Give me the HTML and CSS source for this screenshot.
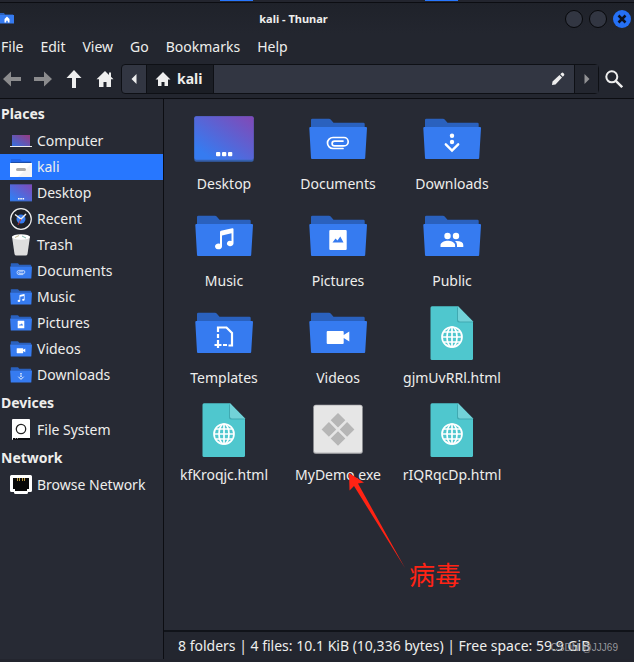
FILE: index.html
```html
<!DOCTYPE html>
<html lang="en">
<head>
<meta charset="utf-8">
<title>kali - Thunar</title>
<link rel="stylesheet" href="styles.css">
</head>
<body>
<svg class="defs" aria-hidden="true">
  <defs>
    <linearGradient id="screen" x1="0" y1="1" x2="1" y2="0">
      <stop offset="0.15" stop-color="#367bf0"/><stop offset="1" stop-color="#8348b5"/>
    </linearGradient>
    <linearGradient id="laptop" x1="0" y1="1" x2="1" y2="0">
      <stop offset="0" stop-color="#3470e0"/><stop offset="1" stop-color="#983a80"/>
    </linearGradient>
    <symbol id="folder" viewBox="0 0 64 64">
      <path fill="#2a61be" d="M5 21V13q0-1.300 1.300-1.300H23q1 0 1.700.7l2.800 3.300H57.400q1.300 0 1.300 1.300v4z"/>
      <path fill="#367bf0" d="M4.300 20H60q1 0 1 1l-1.800 30q0 1-1 1H6q-1 0-1-1L3.300 21q0-1 1-1z"/>
    </symbol>
    <symbol id="clip" viewBox="0 0 64 64">
      <path fill="none" stroke="#fff" stroke-width="1.700" stroke-linecap="round" d="M37 41.500H27a5.500 5.500 0 0 1 0-11H38a4.200 4.200 0 0 1 0 8.400H28.500a2.400 2.400 0 0 1 0-4.800H37"/>
    </symbol>
    <symbol id="down" viewBox="0 0 64 64">
      <circle fill="#fff" cx="32" cy="28.700" r="2.200"/><circle fill="#fff" cx="32" cy="35" r="2.200"/>
      <path fill="none" stroke="#fff" stroke-width="2.400" stroke-linecap="round" d="M25.800 37.300L32 43.500l6.200-6.200"/>
    </symbol>
    <symbol id="note" viewBox="0 0 64 64">
      <path fill="#fff" d="M28 28q0-1 1-1.300L40.300 24.300q1.200-.2 1.200 1V39.500a3.300 2.700 0 1 1-2-2.500V29.300L30 31.500V42.500a3.500 2.900 0 1 1-2-2.700z"/>
    </symbol>
    <symbol id="photo" viewBox="0 0 64 64">
      <rect fill="#fff" x="23.300" y="26" width="17.400" height="20" rx="1"/>
      <path fill="#367bf0" d="M26.500 38.500l3-4 2 2 2.800-4 3.200 6z"/>
    </symbol>
    <symbol id="people" viewBox="0 0 64 64">
      <g fill="#fff"><circle cx="27.500" cy="32" r="3.200"/><circle cx="36" cy="32" r="3.200"/>
      <path d="M20.500 43v-1.800c0-3 4.700-4.400 7.300-4.400s7.300 1.400 7.300 4.400V43zM37 43v-2q0-2.400-2-4 8.300-.3 8.300 4V43z"/></g>
    </symbol>
    <symbol id="template" viewBox="0 0 64 64">
      <g fill="none" stroke="#fff" stroke-width="2.200"><path d="M26 31v-4.500h8.500l5.500 5.500v12.500h-3.500"/><path d="M26 33v4M26 39v8M22.500 44h7M31 44h4"/></g>
    </symbol>
    <symbol id="camera" viewBox="0 0 64 64">
      <path fill="#fff" d="M21.700 30h15q1 0 1 1v3l5.600-3.400v9.800L37.700 37v5q0 1-1 1h-15q-1 0-1-1V31q0-1 1-1z"/>
    </symbol>
    <symbol id="desktop" viewBox="0 0 64 64">
      <rect x="2.300" y="9.300" width="59.400" height="45.400" rx="2" fill="#3560ad"/>
      <rect x="2.300" y="9.300" width="59.400" height="43.400" rx="2" fill="url(#screen)"/>
      <g fill="#fff"><rect x="24" y="45" width="4.300" height="4.300" rx="1"/><rect x="30" y="45" width="4.300" height="4.300" rx="1"/><rect x="36" y="45" width="4.300" height="4.300" rx="1"/></g>
    </symbol>
    <symbol id="html" viewBox="0 0 64 64">
      <path fill="#4fc7ce" d="M12 5.300H38L53 20.500V57.500q0 1.500-1.500 1.500H12q-1.500 0-1.500-1.500V6.800q0-1.500 1.500-1.500z"/>
      <path fill="#40a9b1" d="M37 6v13.500q0 2 2 2h14v-1z"/>
      <path fill="#72d2d8" d="M38 5.300V18.500q0 2 2 2H53z"/>
      <g fill="none" stroke="#fff" stroke-width="1.700"><circle cx="32" cy="36" r="10"/><ellipse cx="32" cy="36" rx="5" ry="10"/><path d="M32 26v20M22 36h20M23.500 31h17M23.500 41h17"/></g>
    </symbol>
    <symbol id="exe" viewBox="0 0 64 64">
      <rect x="7.300" y="6.700" width="49.400" height="49" rx="2.500" fill="#b5b5b7"/>
      <rect x="8" y="7.400" width="48" height="47" rx="2" fill="#e6e6e6"/>
      <path fill="#b6b6b6" d="M32 15l7.300 7.300-7.300 7.300-7.300-7.300zM32 33.200l7.300 7.300-7.300 7.300-7.300-7.300zM22.900 24.100l7.300 7.300-7.300 7.300-7.300-7.300zM41.100 24.100l7.300 7.300-7.300 7.300-7.300-7.300z"/>
    </symbol>
    <symbol id="home" viewBox="0 0 18 18">
      <path fill="#eee" d="M9 1L.5 9.300H3V17h4.500v-5h3v5H15V9.300h2.500L15 6.800V2.500h-2v2.400z"/>
    </symbol>
  </defs>
</svg>

<div class="window">
  <div class="panel-edge"><i class="task"></i><i class="task"></i></div>
  <header class="titlebar">
    <svg class="app-icon" viewBox="0 0 14 12"><path fill="#2a61be" d="M0 0h4l1 1.500h8V4H0z"/><path fill="#367bf0" d="M0 2h14v8.500H0z"/><path fill="#fff" d="M7 3.500L4.500 6v3.500h1.700V7.700h1.600v1.800h1.700V6z"/></svg>
    <h1 class="title">kali - Thunar</h1>
    <div class="controls">
      <button class="control" aria-label="Minimize"></button>
      <button class="control" aria-label="Maximize"></button>
      <button class="control close" aria-label="Close"><svg viewBox="0 0 18 18"><path d="M5.500 5.500l7 7M12.500 5.500l-7 7" stroke="#0c1220" stroke-width="2.500"/></svg></button>
    </div>
  </header>
  <nav class="menubar">
    <button>File</button><button>Edit</button><button>View</button><button>Go</button><button>Bookmarks</button><button>Help</button>
  </nav>
  <div class="toolbar">
    <button class="tool" aria-label="Back" disabled><svg viewBox="0 0 18 18"><path fill="#8b8b8d" d="M0 9l8-7.500V7h10v4H8v5.500z"/></svg></button>
    <button class="tool" aria-label="Forward" disabled><svg viewBox="0 0 18 18"><path fill="#8b8b8d" d="M18 9l-8-7.500V7H0v4h10v5.500z"/></svg></button>
    <button class="tool" aria-label="Up"><svg viewBox="0 0 18 18"><path fill="#eee" d="M9 0l7.500 8H11v10H7V8H1.500z"/></svg></button>
    <button class="tool" aria-label="Home"><svg><use href="#home"/></svg></button>
    <div class="pathbar">
      <button class="path-prev" aria-label="Scroll left"><svg viewBox="0 0 6 10"><path fill="#eee" d="M5.500 0v10L.5 5z"/></svg></button>
      <button class="crumb"><svg viewBox="0 0 18 18"><path fill="#eee" d="M9 2L1.500 9.500H4V16h3.500v-4h3v4H14V9.500h2.500z"/></svg>kali</button>
      <button class="path-edit" aria-label="Edit path"><svg viewBox="0 0 14 14"><path fill="#eee" d="M1 13l.5-3.500L8.500 3 11 5.500 4.500 12.500zM9.300 2.200L10.500 1q1-.8 1.800 0l.7.700q.8.900 0 1.800l-1.200 1.200z"/></svg></button>
      <button class="path-next" aria-label="Scroll right" disabled><svg viewBox="0 0 6 10"><path fill="#929295" d="M.5 0v10l5-5z"/></svg></button>
    </div>
    <button class="tool" aria-label="Search"><svg viewBox="0 0 18 18"><circle cx="6.800" cy="6.800" r="5.500" fill="none" stroke="#eee" stroke-width="2"/><path stroke="#eee" stroke-width="2.400" d="M10.800 10.800l6.400 6.400"/></svg></button>
  </div>

  <div class="body">
    <nav class="sidebar">
      <h2>Places</h2>
      <ul>
        <li><a href="#"><svg viewBox="0 0 22 22"><rect x="2" y="5" width="18" height="11" fill="url(#laptop)"/><path fill="#eee" d="M0 16h22v1H0z"/></svg>Computer</a></li>
        <li class="selected"><a href="#"><svg viewBox="0 0 22 22"><path fill="#2065e8" d="M1 3h9l2 2h9v3H1z"/><path fill="#1c4ea8" d="M1 6h20v2H1z"/><path fill="#fff" d="M0 7h22v14H0z"/><path fill="#ececef" d="M22 7v14H8z" opacity=".6"/><rect x="6" y="12" width="10" height="3" rx="1.500" fill="#aaa"/></svg>kali</a></li>
        <li><a href="#"><svg viewBox="3 3 58 58"><use href="#desktop" width="64" height="64"/></svg>Desktop</a></li>
        <li><a href="#"><svg viewBox="0 0 22 22"><circle cx="11" cy="11" r="10.300" fill="#1e2129" stroke="#eee" stroke-width="1.200"/><circle cx="11" cy="11" r="4.500" fill="#367bf0"/><path d="M5 6.500l6 4.500 5-5" fill="none" stroke="#eee" stroke-width="1.400"/><path d="M11 11l-3 6" stroke="#b33" /></svg>Recent</a></li>
        <li><a href="#"><svg viewBox="0 0 22 22"><path fill="#dedede" d="M2 2.500h18L17.500 20q-.3 1.500-2 1.500h-9q-1.700 0-2-1.500z"/><ellipse cx="11" cy="3" rx="9" ry="2.800" fill="#fff"/><path stroke="#c3ba91" d="M5 3.500l4-2"/><path stroke="#82b8ae" d="M12 2l4 2"/></svg>Trash</a></li>
        <li><a href="#"><svg viewBox="3 3 58 58"><use href="#folder" width="64" height="64"/><use href="#clip" width="64" height="64"/></svg>Documents</a></li>
        <li><a href="#"><svg viewBox="3 3 58 58"><use href="#folder" width="64" height="64"/><use href="#note" width="64" height="64"/></svg>Music</a></li>
        <li><a href="#"><svg viewBox="3 3 58 58"><use href="#folder" width="64" height="64"/><use href="#photo" width="64" height="64"/></svg>Pictures</a></li>
        <li><a href="#"><svg viewBox="3 3 58 58"><use href="#folder" width="64" height="64"/><use href="#camera" width="64" height="64"/></svg>Videos</a></li>
        <li><a href="#"><svg viewBox="3 3 58 58"><use href="#folder" width="64" height="64"/><use href="#down" width="64" height="64"/></svg>Downloads</a></li>
      </ul>
      <h2>Devices</h2>
      <ul>
        <li><a href="#"><svg viewBox="0 0 22 22"><rect x="2" y="0" width="18" height="21" rx="1" fill="#fff"/><path fill="#090a0e" d="M3 19h17v2H3z"/><path fill="#888" d="M5 19h1v1H5zM7 19h1v1H7z"/><circle cx="11" cy="10" r="4.700" fill="none" stroke="#222" stroke-width="1.300"/></svg>File System</a></li>
      </ul>
      <h2>Network</h2>
      <ul>
        <li><a href="#"><svg viewBox="0 0 22 22"><path fill="#fff" d="M1.500 1h19Q22 1 22 2.500v14q0 1.500-1.500 1.500H18v.5q0 1.500-1.500 1.500h-11Q4 20 4 18.500V18H1.500Q0 18 0 16.500v-14Q0 1 1.500 1z"/><path fill="#080808" d="M3 4h16v11h-2v2H5v-2H3z"/><path stroke="#b8963c" d="M7.500 4v3M9.500 4v3M12.500 4v3M14.500 4v3"/></svg>Browse Network</a></li>
      </ul>
    </nav>

    <div class="pane">
      <main class="files">
        <button class="file"><svg><use href="#desktop"/></svg><span>Desktop</span></button>
        <button class="file"><svg><use href="#folder"/><use href="#clip"/></svg><span>Documents</span></button>
        <button class="file"><svg><use href="#folder"/><use href="#down"/></svg><span>Downloads</span></button>
        <button class="file"><svg><use href="#folder"/><use href="#note"/></svg><span>Music</span></button>
        <button class="file"><svg><use href="#folder"/><use href="#photo"/></svg><span>Pictures</span></button>
        <button class="file"><svg><use href="#folder"/><use href="#people"/></svg><span>Public</span></button>
        <button class="file"><svg><use href="#folder"/><use href="#template"/></svg><span>Templates</span></button>
        <button class="file"><svg><use href="#folder"/><use href="#camera"/></svg><span>Videos</span></button>
        <button class="file"><svg><use href="#html"/></svg><span>gjmUvRRl.html</span></button>
        <button class="file"><svg><use href="#html"/></svg><span>kfKroqjc.html</span></button>
        <button class="file"><svg><use href="#exe"/></svg><span>MyDemo.exe</span></button>
        <button class="file"><svg><use href="#html"/></svg><span>rIQRqcDp.html</span></button>
        <div class="annotation">
          <svg viewBox="0 0 56 96"><path fill="#ff2314" d="M0 0l15 9.500-6 1L56 95 5 13l-4.500 4.500z"/></svg>
          <span lang="zh">病毒</span>
        </div>
      </main>
      <footer class="status">8 folders | 4 files: 10.1 KiB (10,336 bytes) | Free space: 59.9 GiB<span class="watermark">CSDN @JJJ69</span></footer>
    </div>
  </div>
</div>
</body>
</html>
```
FILE: styles.css
```css
* { box-sizing: border-box; }

body {
  margin: 0;
  background: #23252e;
  color: #eeeeec;
  font: 14px/20px "Noto Sans", "Noto Sans CJK SC", sans-serif;
}

button {
  margin: 0;
  padding: 0;
  border: 0;
  background: none;
  color: inherit;
  font: inherit;
}

svg { display: block; }

.defs { position: absolute; width: 0; height: 0; }

.window {
  display: flex;
  flex-direction: column;
  min-height: 100vh;
  padding-bottom: 3px;
}

.panel-edge {
  display: flex;
  gap: 172px;
  height: 3px;
  padding-left: 220px;
  border-bottom: 1px solid #0c0d12;
  background: #23252e;
}

.task { width: 33px; height: 1px; background: #2777ff; }

.titlebar {
  display: flex;
  align-items: center;
  height: 31px;
  padding-right: 3px;
  background: linear-gradient(#1f222a, #23262f);
}

.app-icon { width: 14px; height: 12px; }

.title {
  flex: 1;
  margin: 0;
  padding-left: 8px;
  text-align: center;
  font-size: 11px;
  font-weight: 700;
}

.controls { display: flex; gap: 6px; }

.control {
  width: 18px;
  height: 18px;
  border: 1px solid #07080b;
  border-radius: 50%;
  background: #323642;
}

.close { border: 0; background: #2570f5; }

.menubar {
  display: flex;
  gap: 17px;
  height: 26px;
  padding-left: 1px;
  align-items: center;
  background: #23262f;
}

.toolbar {
  display: flex;
  align-items: center;
  gap: 13px;
  height: 39px;
  padding: 0 11px 0 3px;
  border-bottom: 1px solid #0c0d12;
  background: #23262f;
}

.tool svg { width: 18px; height: 18px; }

.toolbar .pathbar { margin: 0 -7px 0 -6px; }

.pathbar {
  display: flex;
  flex: 1;
  height: 30px;
  border: 1px solid #0e1015;
  border-radius: 4px;
  background: #323642;
}

.pathbar button { display: flex; align-items: center; }

.path-prev, .path-next { width: 24px; justify-content: center; }

.path-prev svg, .path-next svg { width: 6px; height: 10px; }

.path-next { border-left: 1px solid #0e1015; background: #23262f; }

.pathbar .crumb {
  gap: 5px;
  width: 68px;
  padding-left: 7px;
  border: solid #0e1015;
  border-width: 0 1px;
  background: #1b1e25;
  font-weight: 700;
}

.crumb svg { width: 18px; height: 18px; }

.pathbar .path-edit { flex: 1; justify-content: flex-end; padding-right: 9px; }

.path-edit svg { width: 14px; height: 14px; }

.body { display: flex; flex: 1; background: #272a34; }

.sidebar { width: 164px; border-right: 1px solid #0c0d12; }

.sidebar h2 {
  margin: 0;
  padding-left: 1px;
  font-size: 14px;
  line-height: 29px;
}

.sidebar ul { margin: 0; padding: 0; list-style: none; }

.sidebar a {
  display: flex;
  align-items: center;
  gap: 5px;
  height: 26px;
  padding-left: 10px;
  color: inherit;
  text-decoration: none;
}

.sidebar svg { width: 22px; height: 22px; }

.selected { background: #2777ff; }

.pane { display: flex; flex: 1; flex-direction: column; }

.files {
  position: relative;
  display: grid;
  flex: 1;
  grid-template-columns: repeat(auto-fill, 114px);
  grid-auto-rows: 97px;
  align-content: start;
  padding: 8px 20px 8px 3px;
}

.file {
  display: flex;
  flex-direction: column;
  align-items: center;
  gap: 3px;
}

.file svg { width: 64px; height: 64px; }

.annotation {
  position: absolute;
  top: 374px;
  left: 185px;
  color: #ff2314;
  font: 26px/30px "Noto Sans CJK SC", sans-serif;
}

.annotation svg { width: 56px; height: 96px; }

.annotation span { position: absolute; top: 86px; left: 60px; white-space: nowrap; }

.status {
  position: relative;
  height: 29px;
  padding-left: 14px;
  border-top: 2px solid #101319;
  background: #23262f;
  line-height: 28px;
  white-space: nowrap;
}

.watermark {
  position: absolute;
  top: 2px;
  right: 16px;
  color: #96979b;
  font-family: "Liberation Sans", sans-serif;
  font-size: 10px;
}
```
